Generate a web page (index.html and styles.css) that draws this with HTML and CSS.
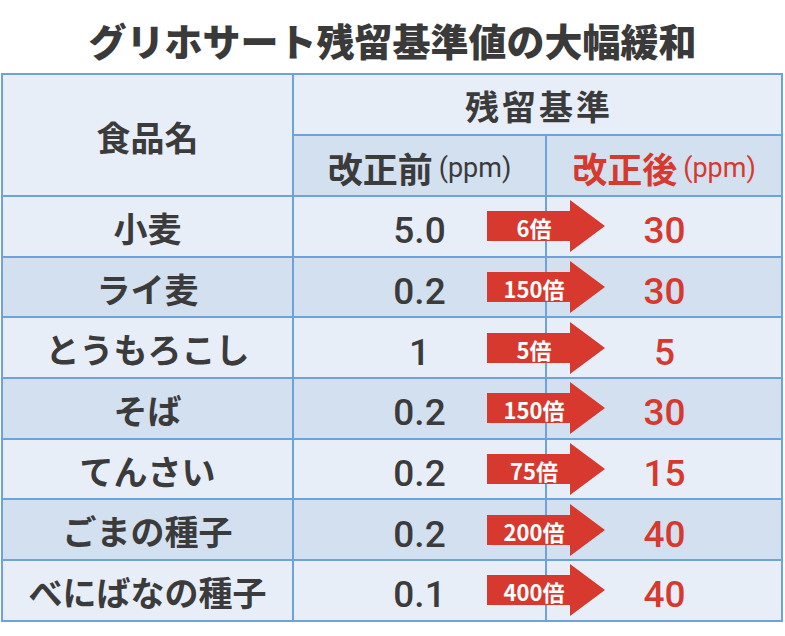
FILE: index.html
```html
<!DOCTYPE html>
<html lang="ja">
<head>
<meta charset="utf-8">
<link rel="stylesheet" href="styles.css">
</head>
<body>
<div class="page">
  <h1 class="title">グリホサート残留基準値の大幅緩和</h1>
  <div class="table">
    <div class="cell light head-name">食品名</div>
    <div class="cell light head-group">残留基準</div>
    <div class="cell dark sub">改正前<span class="unit">(ppm)</span></div>
    <div class="cell dark sub red">改正後<span class="unit">(ppm)</span></div>

    <div class="cell light food">小麦</div>
    <div class="cell light num before"><span>5.0</span><div class="arrow"><svg viewBox="0 0 118 52" width="118" height="52"><polygon points="0,11 83,11 83,0 118,26 83,52 83,41 0,41"/></svg><span class="label">6倍</span></div></div>
    <div class="cell light num after">30</div>

    <div class="cell dark food">ライ麦</div>
    <div class="cell dark num before"><span>0.2</span><div class="arrow"><svg viewBox="0 0 118 52" width="118" height="52"><polygon points="0,11 83,11 83,0 118,26 83,52 83,41 0,41"/></svg><span class="label">150倍</span></div></div>
    <div class="cell dark num after">30</div>

    <div class="cell light food">とうもろこし</div>
    <div class="cell light num before"><span>1</span><div class="arrow"><svg viewBox="0 0 118 52" width="118" height="52"><polygon points="0,11 83,11 83,0 118,26 83,52 83,41 0,41"/></svg><span class="label">5倍</span></div></div>
    <div class="cell light num after">5</div>

    <div class="cell dark food">そば</div>
    <div class="cell dark num before"><span>0.2</span><div class="arrow"><svg viewBox="0 0 118 52" width="118" height="52"><polygon points="0,11 83,11 83,0 118,26 83,52 83,41 0,41"/></svg><span class="label">150倍</span></div></div>
    <div class="cell dark num after">30</div>

    <div class="cell light food">てんさい</div>
    <div class="cell light num before"><span>0.2</span><div class="arrow"><svg viewBox="0 0 118 52" width="118" height="52"><polygon points="0,11 83,11 83,0 118,26 83,52 83,41 0,41"/></svg><span class="label">75倍</span></div></div>
    <div class="cell light num after">15</div>

    <div class="cell dark food">ごまの種子</div>
    <div class="cell dark num before"><span>0.2</span><div class="arrow"><svg viewBox="0 0 118 52" width="118" height="52"><polygon points="0,11 83,11 83,0 118,26 83,52 83,41 0,41"/></svg><span class="label">200倍</span></div></div>
    <div class="cell dark num after">40</div>

    <div class="cell light food">べにばなの種子</div>
    <div class="cell light num before"><span>0.1</span><div class="arrow"><svg viewBox="0 0 118 52" width="118" height="52"><polygon points="0,11 83,11 83,0 118,26 83,52 83,41 0,41"/></svg><span class="label">400倍</span></div></div>
    <div class="cell light num after">40</div>
  </div>
</div>
</body>
</html>
```

FILE: styles.css
```css
html, body {
  margin: 0;
  padding: 0;
  background: #ffffff;
}

.page {
  width: 785px;
  font-family: "Noto Sans CJK JP", "Noto Sans", sans-serif;
  color: #3b3b3b;
}

.title {
  margin: 0;
  height: 73px;
  box-sizing: border-box;
  padding-top: 21px;
  font-size: 38px;
  line-height: 38px;
  font-weight: 900;
  text-align: center;
  color: #3a3a3a;
}

.table {
  margin-left: 1px;
  width: 782px;
  box-sizing: border-box;
  display: grid;
  grid-template-columns: 289px 251px 234px;
  grid-template-rows: 59px 59px repeat(7, 58.7px);
  gap: 2px;
  padding: 2px;
  background: #6ea2da;
}

.cell {
  display: flex;
  align-items: center;
  justify-content: center;
  box-sizing: border-box;
  font-weight: 700;
  font-size: 34px;
  line-height: 1;
}

.light { background: #e8eef8; }
.dark { background: #d3e0ef; }

.head-name {
  grid-row: 1 / 3;
  padding-top: 4px;
}

.head-group {
  grid-column: 2 / 4;
  padding-top: 3px;
  letter-spacing: 3px;
  padding-left: 3px;
}

.sub {
  padding-top: 4px;
  font-size: 35px;
}

.red { color: #d63a2f; }

.unit {
  font-family: "Roboto", "Liberation Sans", sans-serif;
  font-weight: 400;
  font-size: 27px;
  margin-left: 6px;
  position: relative;
  top: 1px;
}

.food {
  padding-top: 3px;
}

.num {
  font-family: "Roboto", "Liberation Sans", sans-serif;
  font-weight: 500;
  font-size: 37px;
  padding-top: 9px;
}

.before {
  position: relative;
  color: #3b3b3b;
}

.after {
  color: #d63a2f;
  padding-left: 1px;
}

.arrow {
  position: absolute;
  left: 193px;
  top: calc(50% - 26px);
  width: 118px;
  height: 52px;
  z-index: 2;
}

.arrow svg {
  display: block;
  fill: #d7392e;
}

.label {
  position: absolute;
  left: 0;
  top: 0;
  width: 94px;
  height: 52px;
  display: flex;
  align-items: center;
  justify-content: center;
  font-family: "Noto Sans CJK JP", "Noto Sans", sans-serif;
  font-weight: 700;
  font-size: 22px;
  line-height: 1;
  color: #ffffff;
  padding-top: 2px;
  box-sizing: border-box;
}
```
